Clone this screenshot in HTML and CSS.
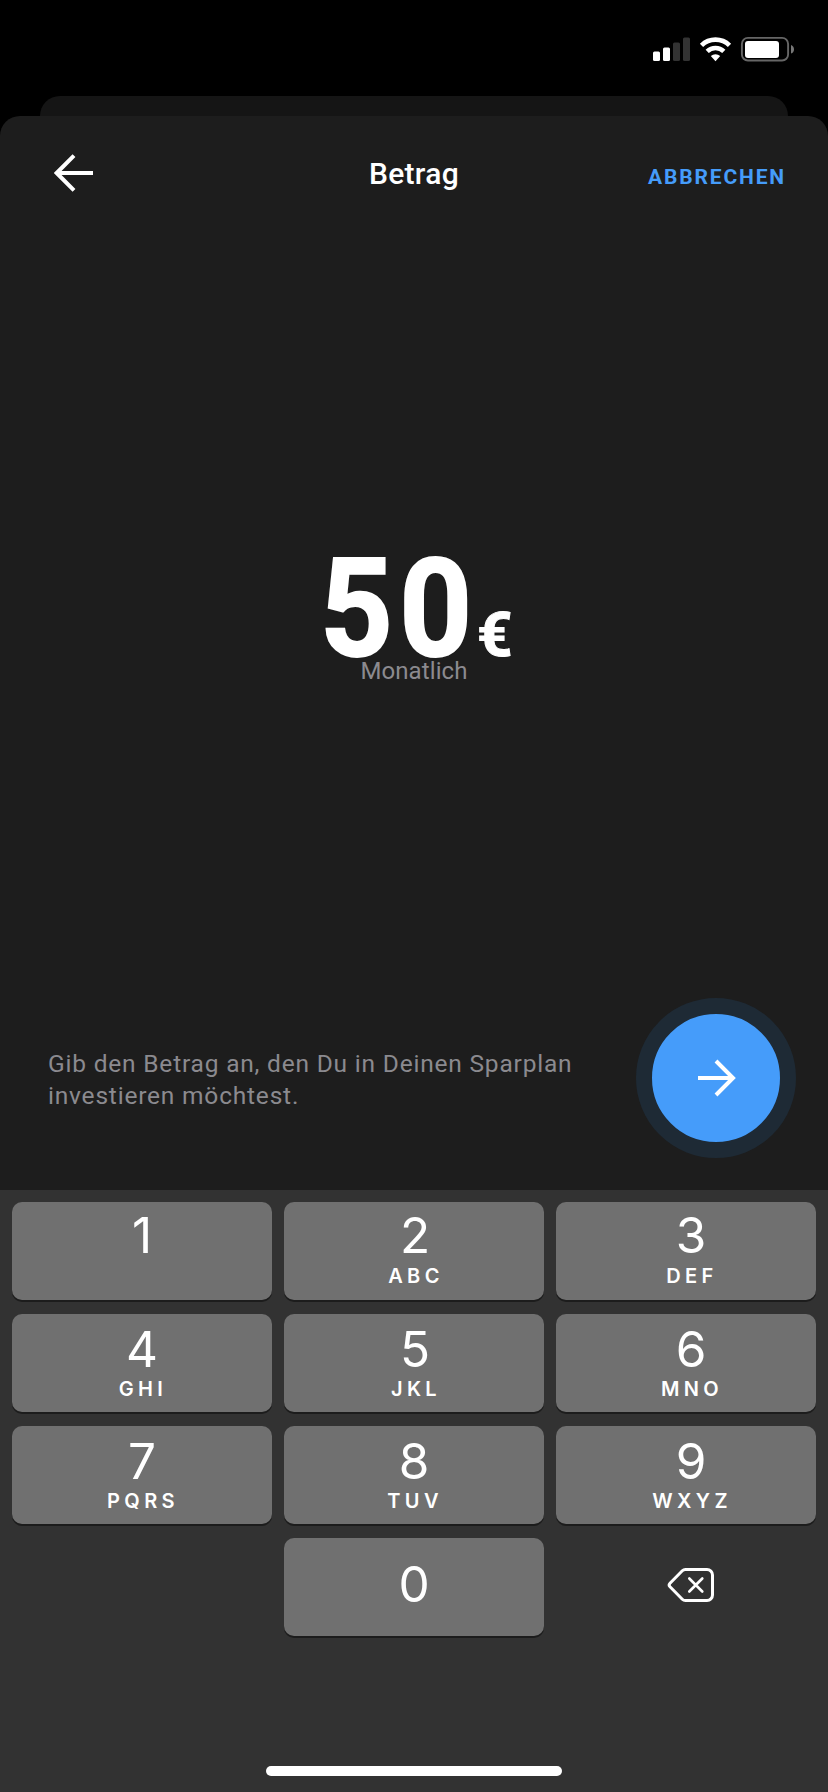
FILE: index.html
```html
<!DOCTYPE html>
<html lang="de">
<head>
  <meta charset="UTF-8" />
  <meta name="viewport" content="width=device-width, initial-scale=1.0"/>
  <title>Betrag</title>
  <link rel="stylesheet" href="styles.css">
</head>
<body>

  <div class="status-bar">
    <svg width="142" height="26" viewBox="0 0 142 26">
      <!-- signal -->
      <g fill="#fff">
        <rect x="0" y="15.5" width="7" height="9.5" rx="1.5"/>
        <rect x="10" y="11.5" width="7" height="13.5" rx="1.5"/>
      </g>
      <g fill="#333">
        <rect x="20" y="6.5" width="7" height="18.5" rx="1.5"/>
        <rect x="30" y="1.5" width="7" height="23.5" rx="1.5"/>
      </g>
      <!-- wifi -->
      <g fill="none" stroke="#fff" stroke-width="4.6">
        <path d="M48.5 9.3a20 20 0 0 1 28 0"/>
        <path d="M54.2 15.3a12 12 0 0 1 16.6 0"/>
      </g>
      <path d="M57.8 20.1a7 7 0 0 1 9.4 0L62.5 25.2z" fill="#fff"/>
      <!-- battery -->
      <rect x="88.9" y="1.9" width="46.2" height="22.6" rx="6" fill="none" stroke="#666" stroke-width="1.9"/>
      <rect x="92" y="5" width="34" height="17" rx="3" fill="#fff"/>
      <path d="M138 9c4 1.3 4 7.3 0 8.6z" fill="#777"/>
    </svg>
  </div>

  <div class="back-card"></div>

  <main class="sheet">
    <header class="header">
      <button class="back">
        <svg width="42" height="40" viewBox="0 0 42 40" fill="none" stroke="#fff" stroke-width="4">
          <path d="M39 20H4M20 2.7L2.7 20 20 37.3"/>
        </svg>
      </button>
      <h1>Betrag</h1>
      <button class="cancel">ABBRECHEN</button>
    </header>

    <section class="amount">
      <div class="value"><span class="number">50</span><span class="currency">€</span></div>
      <div class="interval">Monatlich</div>
    </section>

    <section class="bottom">
      <p class="hint">Gib den Betrag an, den Du in Deinen Sparplan<br>investieren möchtest.</p>
      <button class="next">
        <svg width="40" height="40" viewBox="0 0 40 40" fill="none" stroke="#fff" stroke-width="4">
          <path d="M2 20h34M20 3l17 17-17 17"/>
        </svg>
      </button>
    </section>
  </main>

  <div class="keyboard">
    <div class="keys">
      <button class="key key-first"><span class="digit">1</span></button>
      <button class="key key-first key-mid"><span class="digit">2</span><span class="letters">ABC</span></button>
      <button class="key key-first key-right"><span class="digit">3</span><span class="letters">DEF</span></button>

      <button class="key"><span class="digit">4</span><span class="letters">GHI</span></button>
      <button class="key key-mid"><span class="digit">5</span><span class="letters">JKL</span></button>
      <button class="key key-right"><span class="digit">6</span><span class="letters">MNO</span></button>

      <button class="key"><span class="digit">7</span><span class="letters">PQRS</span></button>
      <button class="key"><span class="digit">8</span><span class="letters">TUV</span></button>
      <button class="key key-right"><span class="digit">9</span><span class="letters">WXYZ</span></button>

      <span></span>
      <button class="key key-zero"><span class="digit">0</span></button>
      <button class="delete">
        <svg width="48" height="36" viewBox="0 0 48 36" fill="none" stroke="#fff" stroke-width="3" stroke-linecap="round" stroke-linejoin="round">
          <path d="M18.5 2.5H40a5.5 5.5 0 0 1 5.5 5.5v20a5.5 5.5 0 0 1-5.5 5.5H18.5a4.5 4.5 0 0 1-3.2-1.3L3 19.8a2.6 2.6 0 0 1 0-3.6L15.3 3.8a4.5 4.5 0 0 1 3.2-1.3z"/>
          <path d="M22.3 11.5l13 13M35.3 11.5l-13 13" stroke-width="2.6"/>
        </svg>
      </button>
    </div>
    <div class="home-indicator"></div>
  </div>

</body>
</html>
```

FILE: styles.css
```css
:root {
  --sheet: #1d1d1d;
  --accent: #459cfa;
  --muted: #8b8a8f;
  --key: #707070;
  --keyboard: #323232;
}

* {
  box-sizing: border-box;
}

body {
  margin: 0;
  height: 1792px;
  background: #000;
  color: #fff;
  font-family: Roboto, "Liberation Sans", sans-serif;
  display: flex;
  flex-direction: column;
  overflow: hidden;
}

button {
  font: inherit;
  color: inherit;
  background: none;
  border: none;
  padding: 0;
  cursor: pointer;
}

svg {
  display: block;
}

.status-bar {
  height: 96px;
  padding: 36px 33px 0 0;
  display: flex;
  justify-content: flex-end;
}

.back-card {
  height: 20px;
  margin: 0 40px;
  background: #151515;
  border-radius: 20px 20px 0 0;
}

.sheet {
  height: 1074px;
  background: var(--sheet);
  border-radius: 20px 20px 0 0;
  display: flex;
  flex-direction: column;
}

.header {
  height: 116px;
  padding: 0 42px 0 54px;
  display: grid;
  grid-template-columns: 1fr auto 1fr;
  align-items: center;
}

.back {
  justify-self: start;
  margin-top: -2px;
}

.header h1 {
  margin: 0 12px 2px 0;
  font-size: 30px;
  font-weight: 500;
  letter-spacing: 0.3px;
}

.cancel {
  justify-self: end;
  margin-top: 5px;
  color: var(--accent);
  font-size: 21px;
  font-weight: 700;
  letter-spacing: 1.85px;
}

.amount {
  flex: 1;
  padding-top: 308px;
  display: flex;
  flex-direction: column;
  align-items: center;
}

.value {
  display: flex;
  align-items: baseline;
  padding-left: 4px;
  font-weight: 700;
  line-height: 138px;
}

.number {
  font-size: 138px;
  letter-spacing: 7px;
  margin-right: -15px;
  transform: scaleX(0.92);
  transform-origin: left;
  -webkit-text-stroke: 2px #fff;
}

.currency {
  font-size: 62px;
  line-height: 1;
  -webkit-text-stroke: 1px #fff;
}

.interval {
  margin-top: -23px;
  color: var(--muted);
  font-size: 24px;
  line-height: 32px;
  letter-spacing: 0.1px;
}

.bottom {
  padding: 0 32px 32px 48px;
  display: flex;
  justify-content: space-between;
  align-items: center;
}

.hint {
  margin: 4px 0 0;
  color: var(--muted);
  font-size: 24.5px;
  line-height: 32px;
  letter-spacing: 0.8px;
}

.next {
  width: 160px;
  height: 160px;
  border: 16px solid #1e2a35;
  border-radius: 50%;
  background: var(--accent);
  display: flex;
  align-items: center;
  justify-content: center;
}

.keyboard {
  flex: 1;
  padding: 12px 12px 16px;
  background: var(--keyboard);
  font-family: Inter, "Liberation Sans", sans-serif;
  display: flex;
  flex-direction: column;
  align-items: center;
  justify-content: space-between;
}

.keys {
  width: 100%;
  display: grid;
  grid-template-columns: repeat(3, 1fr);
  grid-auto-rows: 98px;
  gap: 14px 12px;
}

.key {
  padding-top: 6px;
  background: var(--key);
  border-radius: 10px;
  box-shadow: 0 2px 0 #1c1c1c;
  display: flex;
  flex-direction: column;
  align-items: center;
}

.key-first {
  padding-top: 4px;
}

.key-mid {
  padding-left: 2px;
}

.key-right {
  padding-left: 10px;
}

.key-zero {
  padding-top: 17px;
}

.digit {
  font-size: 49.5px;
  font-weight: 400;
  line-height: 58px;
}

.letters {
  padding-left: 2px;
  font-size: 20px;
  font-weight: 600;
  line-height: 22px;
  letter-spacing: 4.4px;
}

.key-first .letters {
  margin-top: 1px;
}

.delete {
  padding: 0 0 4px 10px;
  display: flex;
  align-items: center;
  justify-content: center;
}

.home-indicator {
  width: 296px;
  height: 10px;
  border-radius: 5px;
  background: #fff;
}
```
